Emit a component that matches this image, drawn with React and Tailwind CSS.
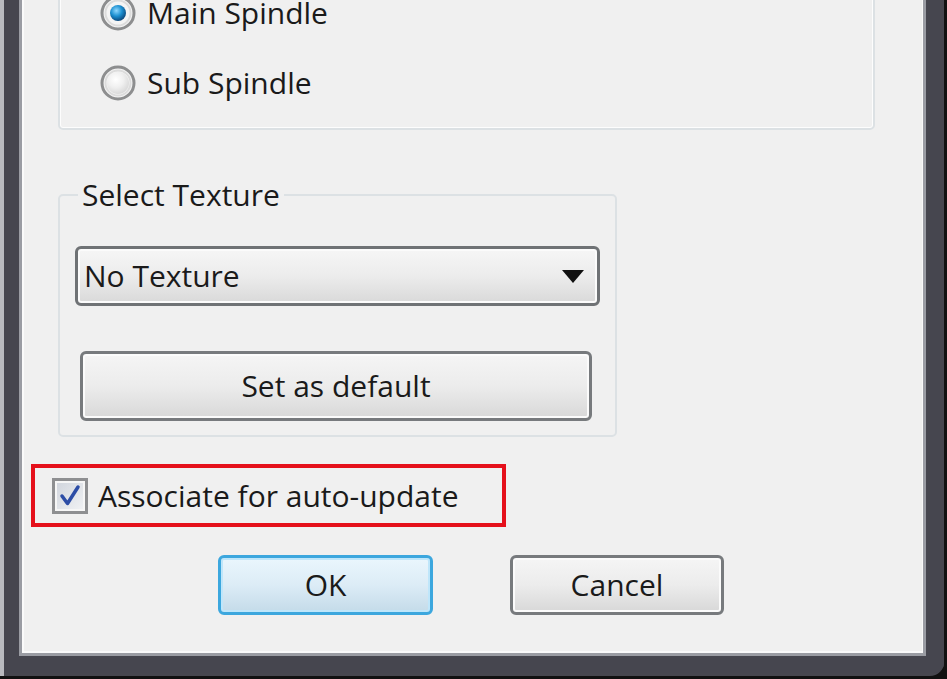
import React from 'react';

const font = { fontFamily: '"Open Sans", "Noto Sans", sans-serif' };

const Radio = ({ checked, label }) => (
    <div className="flex items-center h-[36px] gap-[11px]">
        <svg width="36" height="36" viewBox="0 0 36 36" className="shrink-0">
            <defs>
                <radialGradient id={checked ? 'rb' : 'rg'} cx="0.4" cy="0.35" r="0.7">
                    <stop offset="0" stopColor={checked ? '#8fd8ff' : '#ffffff'} />
                    <stop offset="0.5" stopColor={checked ? '#1c8fd0' : '#f0f0f0'} />
                    <stop offset="1" stopColor={checked ? '#0a3f72' : '#d6d6d6'} />
                </radialGradient>
            </defs>
            <circle cx="18" cy="18" r="16" fill="#f4f4f4" stroke="#8d8e8f" strokeWidth="3" />
            <circle cx="18" cy="18" r="12.5" fill="none" stroke="#dcdcdc" strokeWidth="2" />
            <circle cx="18" cy="18" r={checked ? 8 : 11} fill={checked ? 'url(#rb)' : 'url(#rg)'} />
        </svg>
        <span className="text-[30px] leading-none text-[#1a1a1a]">{label}</span>
    </div>
);

const WinButton = ({ children, className = '', focused }) => (
    <div
        className={`flex items-center justify-center rounded-[6px] border-[3px] text-[30px] leading-none text-[#1a1a1a] ${
            focused
                ? 'border-[#3ca7de] bg-gradient-to-b from-[#eaf6fd] via-[#dcecf6] to-[#c4dbe9] shadow-[inset_0_0_0_2px_#bfe6fa]'
                : 'border-[#777a7d] bg-gradient-to-b from-[#f5f5f5] via-[#ececec] to-[#d8d8d8] shadow-[inset_0_0_0_2px_#fbfbfb]'
        } ${className}`}
    >
        {children}
    </div>
);

export default function App() {
    return (
        <div style={font} className="w-[947px] h-[679px] overflow-hidden bg-[#111]">
            <div className="h-[676px] w-[944px] border-l-[4px] border-l-[#b9babf] rounded-br-[14px] bg-[#47474f]">
                <div className="h-[673px] border-l-[15px] border-r-[18px] border-b-[17px] border-[#46464f] rounded-br-[10px] bg-[#47474f]">
                    <div className="h-full border-x-[3px] border-b-[3px] border-[#9a9ca3]">
                        <div className="h-full border-l-[2px] border-r-[1px] border-b-[2px] border-[#fafafa]">
                            <div className="h-full bg-[#f0f0f0] flex flex-col pl-[34px] overflow-hidden">
                                {/* Spindle group */}
                                <div className="mt-[-40px] w-[817px] h-[170px] rounded-[5px] border-2 border-[#dce1e4] shadow-[inset_0_0_0_1px_#fdfdfd] pt-[33px] pl-[40px] flex flex-col gap-[34px]">
                                    <Radio checked label="Main Spindle" />
                                    <Radio label="Sub Spindle" />
                                </div>

                                {/* Texture group */}
                                <fieldset className="mt-[47px] w-[559px] rounded-[5px] border-2 border-[#dce1e4] px-[15px] pb-[14px]">
                                    <legend className="ml-[3px] px-[4px] text-[30px] leading-[36px] text-[#1a1a1a]">
                                        Select Texture
                                    </legend>
                                    <div className="mt-[33px] h-[60px] w-[525px] rounded-[6px] border-[3px] border-[#6f7275] bg-gradient-to-b from-[#f6f6f6] via-[#ececec] to-[#d9d9d9] shadow-[inset_0_0_0_2px_#fbfbfb] flex items-center pl-[6px] pr-[13px]">
                                        <span className="flex-1 text-[30px] leading-none text-[#1a1a1a]">No Texture</span>
                                        <svg width="22" height="13" viewBox="0 0 22 13">
                                            <path d="M0 0 H22 L11 13 Z" fill="#111" />
                                        </svg>
                                    </div>
                                    <WinButton className="mt-[45px] ml-[5px] h-[70px] w-[512px]">Set as default</WinButton>
                                </fieldset>

                                {/* Auto-update checkbox highlighted */}
                                <div className="mt-[27px] ml-[-27px] w-[475px] h-[63px] border-[4px] border-[#e5101b] flex items-center pl-[17px] gap-[10px]">
                                    <div className="w-[36px] h-[36px] border-[3px] border-[#8e8f91] bg-gradient-to-br from-[#cfd4dc] to-[#f2f3f5] shadow-[inset_0_0_0_2px_#f6f6f6] flex items-center justify-center">
                                        <svg width="24" height="24" viewBox="0 0 24 24">
                                            <path d="M4 12 L9.5 19.5 L20 3" fill="none" stroke="#2c4da6" strokeWidth="3.5" strokeLinecap="round" strokeLinejoin="round" />
                                        </svg>
                                    </div>
                                    <span className="text-[30px] leading-none text-[#1a1a1a]">Associate for auto-update</span>
                                </div>

                                {/* Dialog buttons */}
                                <div className="mt-[28px] ml-[160px] flex gap-[77px]">
                                    <WinButton focused className="h-[60px] w-[215px]">OK</WinButton>
                                    <WinButton className="h-[60px] w-[214px]">Cancel</WinButton>
                                </div>
                            </div>
                        </div>
                    </div>
                </div>
            </div>
        </div>
    );
}
